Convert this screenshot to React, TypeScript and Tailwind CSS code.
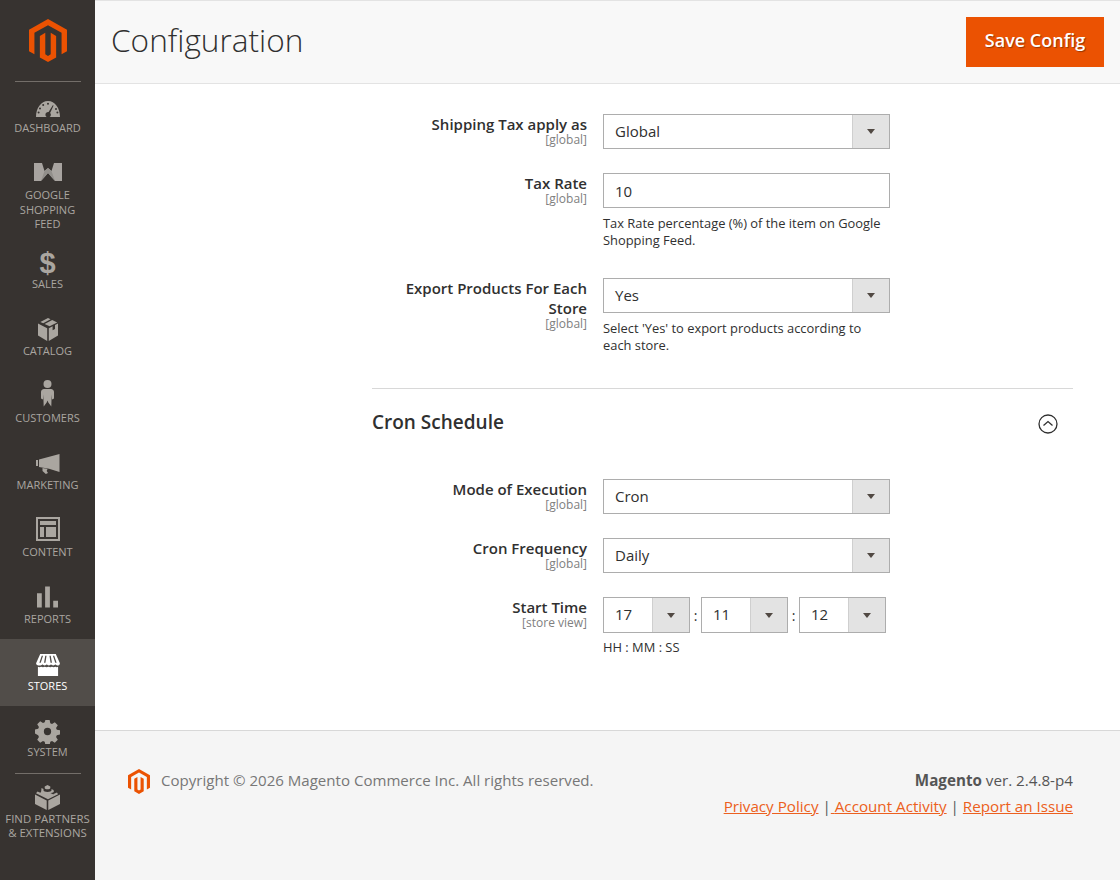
import type { ReactNode } from "react";

const font = { fontFamily: '"Open Sans", "Noto Sans", sans-serif' };

function MagentoLogo({ className }: { className: string }) {
  return (
    <svg viewBox="1.6 0 20.8 24" className={className} fill="#eb5202" preserveAspectRatio="none">
      <path d="M12 24l-4.455-2.572v-12l2.97-1.715v12.001l1.485.902 1.485-.902V7.713l2.97 1.715v12L12 24zM22.391 6v12l-2.969 1.714V7.713L12 3.43 4.574 7.713v12L1.609 18V6L12 0l10.391 6z" />
    </svg>
  );
}

const iconClass = "fill-current";

const DashboardIcon = () => (
  <svg viewBox="0 0 24 16" className={`w-[24px] h-[16px] mt-[4px] ${iconClass}`}>
    <path
      fillRule="evenodd"
      d="M0 16C0 7 5 0 12 0s12 7 12 16H0zM16.800 4.200l-4.200 6.900a2.700 2.700 0 1 0 1.500.8l3.500-7.300-.8-.4zM12 1.800a1 1 0 1 0 0 2 1 1 0 0 0 0-2zM7.200 3a1 1 0 1 0 0 2 1 1 0 0 0 0-2zM4 6.400a1 1 0 1 0 0 2 1 1 0 0 0 0-2zM2.600 10.400a1 1 0 1 0 0 2 1 1 0 0 0 0-2zM20 7a1 1 0 1 0 0 2 1 1 0 0 0 0-2zM21.400 10.600a1 1 0 1 0 0 2 1 1 0 0 0 0-2z"
    />
  </svg>
);

const FeedIcon = () => (
  <svg viewBox="0 0 28 18" className="w-[28px] h-[18px] mb-[4px]">
    <path d="M0 0h8l2.500 8L14 5l3.500 3L20 0h8v18h-7l-7-8-7 8H0z" fill="#a8a4a0" />
    <path d="M10.500 8L14 5l3.500 3L21 18l-7-8-7 8z" fill="#928f8b" />
  </svg>
);

const DollarIcon = () => (
  <span className="text-[29px] leading-none font-bold [font-family:'Liberation_Sans',sans-serif]">$</span>
);

const CatalogIcon = () => (
  <svg viewBox="0 0 20 23" className={`w-[20px] h-[23px] mb-[2px] ${iconClass}`}>
    <path d="M10 0l2.600 1.300-7.400 4-2.900-1.300zM14.200 2.100l5 2.400-7.600 3.800-5-2.400zM0 5.600l9.200 4.600V23L0 17.600zM20 5.600v12L10.800 23V10.200l3.800-1.900v4l2.400-1.200v-4z" />
  </svg>
);

const CustomersIcon = () => (
  <svg viewBox="0 0 13 27" className={`w-[13px] h-[27px] mb-[8px] ${iconClass}`}>
    <circle cx="6.500" cy="4" r="4" />
    <path d="M3 9h7c1.600 0 3 1.400 3 3v6.500l-2 1-.3-5-.4 12-3-4-.8-2-.8 2-3 4-.4-12-.3 5-2-1V12c0-1.600 1.400-3 3-3z" />
  </svg>
);

const MarketingIcon = () => (
  <svg viewBox="0 0 24 20" className={`w-[24px] h-[20px] ${iconClass}`}>
    <path d="M0 6h2v6H0zM3 5.500L23.500 0v18L13 14.800 3 13zM6.500 14l5 1-.8 2 1.300 2-2.200 1-3.300-3z" />
  </svg>
);

const ContentIcon = () => (
  <svg viewBox="0 0 24 24" className={`w-[24px] h-[24px] mb-[4px] ${iconClass}`}>
    <path
      fillRule="evenodd"
      d="M0 0h24v24H0zM2 2v20h20V2zM4 4h16v4H4zM4 10h4v10H4zM10 10h10v10H10z"
    />
  </svg>
);

const ReportsIcon = () => (
  <svg viewBox="0 0 22 22" className={`w-[21px] h-[22px] mb-[2px] ${iconClass}`}>
    <path d="M0 7h5v15H0zM8.500 0h5v22h-5zM17 15h5v7h-5z" />
  </svg>
);

const StoresIcon = () => (
  <svg viewBox="0 0 26 24" className={`w-[26px] h-[22px] ${iconClass}`}>
    <path
      fillRule="evenodd"
      d="M4.500 0h17L26 10c0 1.500-1.200 2.500-2.700 2.500-.9 0-1.800-.5-2.300-1.200-.5.7-1.300 1.200-2.300 1.200s-2-.5-2.400-1.200c-.5.7-1.300 1.200-2.300 1.200s-1.800-.5-2.300-1.200c-.5.7-1.400 1.200-2.400 1.200s-1.800-.5-2.300-1.200c-.5.7-1.300 1.200-2.300 1.200C1.200 12.500 0 11.500 0 10zM6.200 2L3.600 9.500h1.500L7.600 2zM10 2L8.700 9.500h1.500L11.400 2zM14.600 2l1.200 7.500h1.500L16 2zM18.400 2l2.500 7.500h1.500L19.800 2z"
    />
    <path d="M2 14c1 .5 2.500.5 3.500 0 1.200.6 2.800.6 4 0 1.100.6 2.900.6 4 0 1.200.6 2.800.6 3.800 0 1.100.6 2.700.6 3.700 0 1 .5 2 .5 3 0v10H2z" />
  </svg>
);

const SystemIcon = () => (
  <svg viewBox="-1 -1 26 26" className={`w-[25px] h-[25px] ${iconClass}`}>
    <path
      fillRule="evenodd"
      d="M9.800 0h4.400l.7 3.300 1.800.8 2.900-1.800 3.100 3.100-1.800 2.900.8 1.800 3.300.7v4.400l-3.300.7-.8 1.800 1.800 2.900-3.100 3.100-2.900-1.800-1.800.8-.7 3.300H9.800l-.7-3.300-1.800-.8-2.900 1.800-3.100-3.100 1.800-2.900-.8-1.800L-1 14.200V9.800l3.300-.7.8-1.800-1.800-2.900 3.100-3.100 2.900 1.800 1.800-.8zM12 8.200a3.800 3.800 0 1 0 0 7.600 3.800 3.800 0 0 0 0-7.600z"
    />
  </svg>
);

const PartnersIcon = () => (
  <svg viewBox="0 0 25 25" className={`w-[25px] h-[25px] ${iconClass}`}>
    <path d="M0 9.500l11.700 6V25L0 19zM25 9.500l-11.700 6V25L25 19z" />
    <path d="M12.500 0l2.800 1.400v1.500c0 .8-1.300 1.400-2.800 1.400S9.700 3.700 9.700 2.900V1.400zM6.500 3l2 1v1.200c0 1 1.800 1.700 4 1.700s4-.7 4-1.700V4l2 1 .4 1.200c0 1-1.300 1.700-3 1.700h-.6l3.200 1.500v-.5l3.500-1.500 1 1.800-10 5.100-12-6 1.500-1.800 2.900 1.300c.4-.6.800-1 .8-1.500z" />
  </svg>
);

type NavItem = { label: string[]; icon: ReactNode; h: string; top?: string; active?: boolean };

const navItems: NavItem[] = [
  { label: ["Dashboard"], icon: <DashboardIcon />, h: "h-[67px] -mt-px" },
  { label: ["Google", "Shopping", "Feed"], icon: <FeedIcon />, h: "h-[89px]" },
  { label: ["Sales"], icon: <DollarIcon />, h: "h-[67px]" },
  { label: ["Catalog"], icon: <CatalogIcon />, h: "h-[67px]" },
  { label: ["Customers"], icon: <CustomersIcon />, h: "h-[67px]" },
  { label: ["Marketing"], icon: <MarketingIcon />, h: "h-[67px]" },
  { label: ["Content"], icon: <ContentIcon />, h: "h-[67px]" },
  { label: ["Reports"], icon: <ReportsIcon />, h: "h-[67px]" },
  { label: ["Stores"], icon: <StoresIcon />, h: "h-[67px]", active: true },
  { label: ["System"], icon: <SystemIcon />, h: "h-[67px]", top: "pt-[8px]" }
];

function NavLink({ item }: { item: NavItem }) {
  return (
    <div
      className={`flex flex-col items-center ${item.h} ${item.top ?? "pt-[9px]"} ${
        item.active ? "bg-[#514d49] text-white" : "text-[#aaa6a0]"
      }`}
    >
      <div className="flex items-center justify-center h-[34px] shrink-0">{item.icon}</div>
      <div className="text-[11px] leading-[14.5px] uppercase text-center mt-[-3px]">
        {item.label.map((l) => (
          <div key={l}>{l}</div>
        ))}
      </div>
    </div>
  );
}

function Sidebar() {
  return (
    <aside className="w-[95px] shrink-0 bg-[#373330] flex flex-col">
      <div className="h-[82px] shrink-0 flex flex-col items-center">
        <MagentoLogo className="w-[38px] h-[43px] mt-[19px]" />
        <div className="w-[66px] h-px bg-[#736e69] mt-[19px]" />
      </div>
      {navItems.map((item) => (
        <NavLink key={item.label[0]} item={item} />
      ))}
      <div className="w-[66px] h-px bg-[#736e69] mx-auto" />
      <div className="flex flex-col items-center text-[#aaa6a0]">
        <div className="flex items-center justify-center h-[30px] mt-[8px]">
          <PartnersIcon />
        </div>
        <div className="text-[11.4px] leading-[14px] uppercase text-center">
          <div>Find Partners</div>
          <div>&amp; Extensions</div>
        </div>
      </div>
    </aside>
  );
}

function Arrow() {
  return <span className="w-0 h-0 border-x-[4px] border-x-transparent border-t-[5px] border-t-[#514943]" />;
}

function Select({ value, className, btn, h = "h-[35px]" }: { value: string; className: string; btn: string; h?: string }) {
  return (
    <div className={`flex ${h} border border-[#adadad] bg-white ${className}`}>
      <div className="flex-1 pl-[11px] text-[15px] leading-[33px] text-[#303030]">{value}</div>
      <div className={`flex items-center justify-center bg-[#e3e3e3] border-l border-[#cfcfcf] ${btn}`}>
        <Arrow />
      </div>
    </div>
  );
}

function FieldLabel({ text, scope }: { text: ReactNode; scope: string }) {
  return (
    <div className="w-[215px] shrink-0 text-right">
      <div className="text-[15px] leading-[20px] font-semibold text-[#303030]">{text}</div>
      <div className="text-[12px] leading-[11px] text-[#808080]">{scope}</div>
    </div>
  );
}

function Note({ lines, mt = "mt-[7px]" }: { lines: string[]; mt?: string }) {
  return (
    <div className={`text-[12.9px] leading-[17px] text-[#303030] ${mt}`}>
      {lines.map((l) => (
        <div key={l}>{l}</div>
      ))}
    </div>
  );
}

function Row({ label, scope, mb, children }: { label: ReactNode; scope: string; mb: string; children: ReactNode }) {
  return (
    <div className={`flex gap-[16px] ${mb}`}>
      <FieldLabel text={label} scope={scope} />
      <div className="w-[287px]">{children}</div>
    </div>
  );
}

function Chevron() {
  return (
    <svg viewBox="0 0 20 20" className="w-[20px] h-[20px] mt-[2px]" fill="none" stroke="#303030">
      <circle cx="10" cy="10" r="9" strokeWidth="1.300" />
      <path d="M5.500 11.500L10 7.500l4.500 4" strokeWidth="1.300" />
    </svg>
  );
}

function Footer() {
  return (
    <footer className="flex-1 bg-[#f5f5f5] border-t border-[#d8d8d8] pt-[37px] pl-[33px] pr-[47px] flex justify-between">
      <div className="flex items-start gap-[11px] text-[15.07px] text-[#777]">
        <MagentoLogo className="w-[22px] h-[25px] mt-[1px]" />
        <span className="leading-[24px]">Copyright © 2026 Magento Commerce Inc. All rights reserved.</span>
      </div>
      <div className="text-right text-[15.2px] text-[#555]">
        <div className="leading-[24px]">
          <span className="font-bold">Magento</span> ver. 2.4.8-p4
        </div>
        <div className="leading-[24px] mt-[2px]">
          <span className="text-[#ec6020] underline">Privacy Policy</span>
          <span> |</span>
          <span className="text-[#ec6020] underline">{"\u00a0"}Account Activity</span>
          <span> | </span>
          <span className="text-[#ec6020] underline">Report an Issue</span>
        </div>
      </div>
    </footer>
  );
}

export default function App() {
  return (
    <div className="flex min-h-screen bg-white" style={font}>
      <Sidebar />
      <main className="flex-1 flex flex-col min-w-0">
        <header className="h-[84px] shrink-0 bg-[#f8f8f8] border-t border-[#e3e3e3] border-b flex items-start justify-between pl-[16px] pr-[16px]">
          <h1 className="text-[31.6px] leading-[40px] font-light text-[#303030] mt-[19px]">Configuration</h1>
          <button className="w-[138px] h-[50px] mt-[16px] pb-[4px] bg-[#eb5202] text-white text-[18px] font-semibold [text-shadow:1px_1px_1px_rgba(0,0,0,0.35)]">
            Save Config
          </button>
        </header>

        <section className="h-[646px] shrink-0 pl-[277px] pr-[47px] pt-[30px]">
          <Row label="Shipping Tax apply as" scope="[global]" mb="mb-[24px]">
            <Select value="Global" className="w-full" btn="w-[37px]" />
          </Row>
          <Row label="Tax Rate" scope="[global]" mb="mb-[29px]">
            <div className="h-[35px] border border-[#adadad] bg-white pl-[11px] text-[15px] leading-[34px] text-[#303030]">
              10
            </div>
            <Note lines={["Tax Rate percentage (%) of the item on Google", "Shopping Feed."]} />
          </Row>
          <Row
            label={
              <>
                Export Products For Each
                <br />
                Store
              </>
            }
            scope="[global]"
            mb="mb-[34px]"
          >
            <Select value="Yes" className="w-full" btn="w-[37px]" />
            <Note lines={["Select 'Yes' to export products according to", "each store."]} />
          </Row>

          <div className="border-t border-[#d8d8d8] flex items-center justify-between h-[68px] pr-[15px] mb-[23px]">
            <h2 className="text-[19px] font-semibold text-[#303030]">Cron Schedule</h2>
            <Chevron />
          </div>

          <Row label="Mode of Execution" scope="[global]" mb="mb-[24px]">
            <Select value="Cron" className="w-full" btn="w-[37px]" />
          </Row>
          <Row label="Cron Frequency" scope="[global]" mb="mb-[24px]">
            <Select value="Daily" className="w-full" btn="w-[37px]" />
          </Row>
          <Row label="Start Time" scope="[store view]" mb="mb-0">
            <div className="flex items-center w-[300px]">
              <Select value="17" className="w-[87px]" btn="w-[37px]" h="h-[36px]" />
              <span className="w-[11px] text-center text-[14px] text-[#303030]">:</span>
              <Select value="11" className="w-[87px]" btn="w-[37px]" h="h-[36px]" />
              <span className="w-[11px] text-center text-[14px] text-[#303030]">:</span>
              <Select value="12" className="w-[87px]" btn="w-[37px]" h="h-[36px]" />
            </div>
            <Note lines={["HH : MM : SS"]} mt="mt-[6px]" />
          </Row>
        </section>

        <Footer />
      </main>
    </div>
  );
}
